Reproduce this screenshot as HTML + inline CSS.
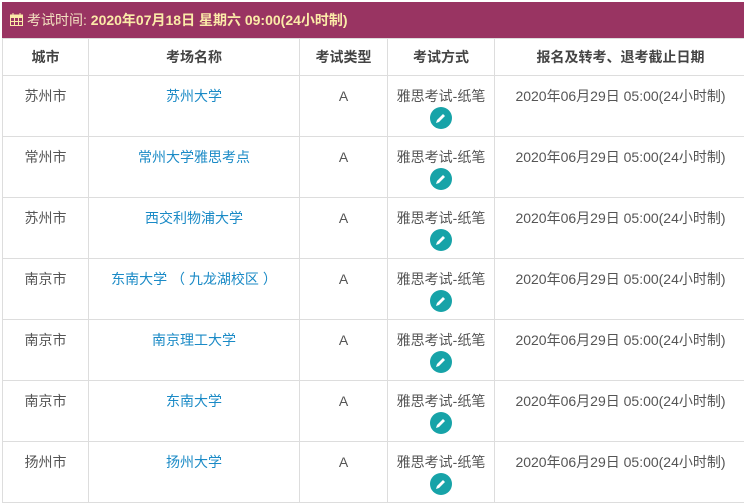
<!DOCTYPE html>
<html><head><meta charset="utf-8"><style>
body{margin:0;background:#fff;font-family:"Liberation Sans","Noto Sans CJK SC",sans-serif;}
.bar{position:absolute;left:2px;top:2px;width:742px;height:36px;background:#993462;color:#fbeaa8;font-size:14px;font-weight:bold;line-height:36px;}
.bar span.l{color:#f3e1c0;font-weight:normal}
table{position:absolute;left:2px;top:38px;border-collapse:collapse;width:744px;table-layout:fixed}
td,th{border:1px solid #ddd;text-align:center;vertical-align:top;font-size:14px;color:#555;padding:0}
th{height:36px;line-height:36px;font-weight:bold;color:#444}
td{height:61px;padding-top:11px;box-sizing:border-box;line-height:18px}
td.n{color:#1a8ac6}
.ic{display:inline-block;width:22px;height:22px;border-radius:50%;background:#17a3a8;margin-top:2px;position:relative}
.ic svg{position:absolute;left:5px;top:5px}
</style></head><body>
<div class="bar"><svg width="13" height="13" style="position:absolute;left:8px;top:11px" viewBox="0 0 13 13"><rect x="0.5" y="2" width="12" height="10.5" fill="none" stroke="#fbeaa8"/><rect x="0.5" y="2" width="12" height="3" fill="#fbeaa8"/><path d="M3 0v3M10 0v3M4.5 5v7.5M8.5 5v7.5M1 8.5h11" stroke="#fbeaa8"/></svg><span style="padding-left:25px" class="l">考试时间:</span> 2020年07月18日 星期六 09:00(24小时制)</div>
<table>
<colgroup><col style="width:86px"><col style="width:211px"><col style="width:88px"><col style="width:107px"><col style="width:252px"></colgroup>
<tr><th>城市</th><th>考场名称</th><th>考试类型</th><th>考试方式</th><th>报名及转考、退考截止日期</th></tr>
<tr><td>苏州市</td><td class="n">苏州大学</td><td>A</td><td>雅思考试-纸笔<br><span class="ic"><svg width="12" height="12" viewBox="0 0 12 12"><path d="M1 11l1-3 6-6 2 2-6 6z" fill="#fff"/></svg></span></td><td>2020年06月29日 05:00(24小时制)</td></tr>
<tr><td>常州市</td><td class="n">常州大学雅思考点</td><td>A</td><td>雅思考试-纸笔<br><span class="ic"><svg width="12" height="12" viewBox="0 0 12 12"><path d="M1 11l1-3 6-6 2 2-6 6z" fill="#fff"/></svg></span></td><td>2020年06月29日 05:00(24小时制)</td></tr>
<tr><td>苏州市</td><td class="n">西交利物浦大学</td><td>A</td><td>雅思考试-纸笔<br><span class="ic"><svg width="12" height="12" viewBox="0 0 12 12"><path d="M1 11l1-3 6-6 2 2-6 6z" fill="#fff"/></svg></span></td><td>2020年06月29日 05:00(24小时制)</td></tr>
<tr><td>南京市</td><td class="n">东南大学 （ 九龙湖校区 ）</td><td>A</td><td>雅思考试-纸笔<br><span class="ic"><svg width="12" height="12" viewBox="0 0 12 12"><path d="M1 11l1-3 6-6 2 2-6 6z" fill="#fff"/></svg></span></td><td>2020年06月29日 05:00(24小时制)</td></tr>
<tr><td>南京市</td><td class="n">南京理工大学</td><td>A</td><td>雅思考试-纸笔<br><span class="ic"><svg width="12" height="12" viewBox="0 0 12 12"><path d="M1 11l1-3 6-6 2 2-6 6z" fill="#fff"/></svg></span></td><td>2020年06月29日 05:00(24小时制)</td></tr>
<tr><td>南京市</td><td class="n">东南大学</td><td>A</td><td>雅思考试-纸笔<br><span class="ic"><svg width="12" height="12" viewBox="0 0 12 12"><path d="M1 11l1-3 6-6 2 2-6 6z" fill="#fff"/></svg></span></td><td>2020年06月29日 05:00(24小时制)</td></tr>
<tr><td>扬州市</td><td class="n">扬州大学</td><td>A</td><td>雅思考试-纸笔<br><span class="ic"><svg width="12" height="12" viewBox="0 0 12 12"><path d="M1 11l1-3 6-6 2 2-6 6z" fill="#fff"/></svg></span></td><td>2020年06月29日 05:00(24小时制)</td></tr>
</table>
</body></html>
